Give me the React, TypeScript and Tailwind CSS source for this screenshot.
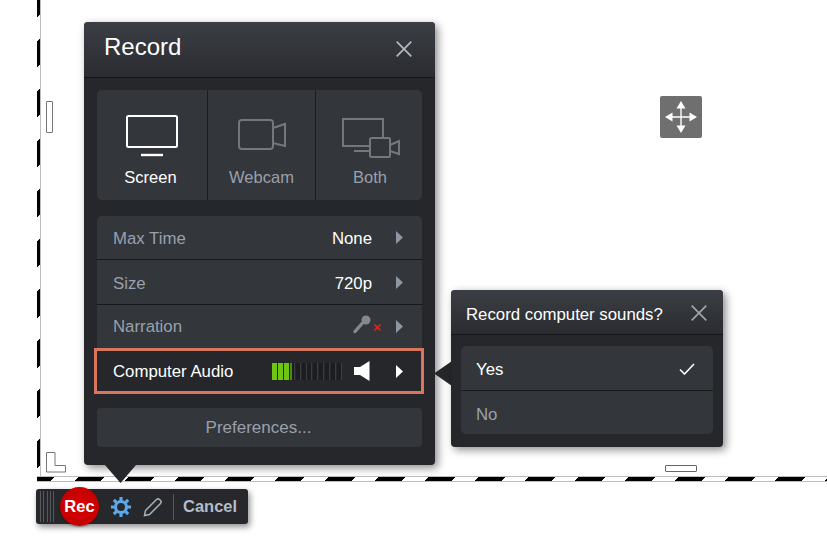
const font = { fontFamily: '"Liberation Sans", Arial, sans-serif' };

function CloseX({ size, className }: { size: number; className: string }) {
  return (
    <svg width={size} height={size} viewBox="0 0 16 16" className={className} fill="none" stroke="currentColor" strokeWidth="1.7">
      <path d="M0.7 0.7 L15.3 15.3 M15.3 0.7 L0.7 15.3" />
    </svg>
  );
}

function Tri({ className }: { className: string }) {
  return (
    <svg width="7" height="13" viewBox="0 0 7 13" className={className}>
      <path d="M0 0 L7 6.5 L0 13 Z" fill="currentColor" />
    </svg>
  );
}

function ListRow({ label, className, children }: { label: string; className: string; children: React.ReactNode }) {
  return (
    <div className={"flex items-center justify-between pl-4 pr-[19px] text-[16.8px] text-[#9aa0ad] " + className}>
      <span>{label}</span>
      {children}
    </div>
  );
}

function Meter() {
  const bars = Array.from({ length: 12 }, (_, i) => i);
  return (
    <div className="flex h-[17px] w-[70px] justify-between">
      {bars.map((i) => (
        <div
          key={i}
          className={
            i < 3
              ? "w-[5px] bg-[#6fc414]"
              : i === 3
                ? "w-[5px] border-l-2 border-r border-l-[#4f8a12] border-r-[#3a3c40] bg-[#1b1d20]"
                : "w-[5px] border-r border-[#3a3c40] bg-[#1b1d20]"
          }
        />
      ))}
    </div>
  );
}

export default function App() {
  return (
    <div style={font} className="relative h-[546px] w-[827px] overflow-hidden bg-white">
      {/* capture frame */}
      <div className="absolute left-[37px] top-0 h-[482px] w-[4px] border-r border-r-[#bdbdbd] bg-[repeating-linear-gradient(135deg,#000_0,#000_12.7px,#fff_12.7px,#fff_29px,#000_29px,#000_35.36px)]" />
      <div className="absolute left-[37px] top-[476px] h-[6px] w-[790px] border-y border-y-[#bdbdbd] bg-[repeating-linear-gradient(135deg,#000_0,#000_12.7px,#fff_12.7px,#fff_29px,#000_29px,#000_35.36px)]" />
      <div className="absolute left-[46px] top-[101px] h-[32px] w-[7px] rounded-[1px] border border-[#777]" />
      <div className="absolute left-[665px] top-[465px] h-[7px] w-[32px] rounded-[1px] border border-[#666]" />
      <svg className="absolute left-[46px] top-[452px]" width="21" height="21" viewBox="0 0 21 21" fill="none">
        <path d="M0.5 0.5 H9 V13.5 H19.5 V20 H0.5 Z" stroke="#777" />
      </svg>

      {/* move handle */}
      <div className="absolute left-[660px] top-[96px] flex h-[42px] w-[42px] items-center justify-center rounded-[2px] bg-[#6f6f6f]">
        <svg width="32" height="32" viewBox="0 0 32 32" fill="#fff">
          <path d="M16 0 L20.5 7.5 H11.5 Z M16 32 L11.5 24.5 H20.5 Z M0 16 L7.5 11.5 V20.5 Z M32 16 L24.5 20.5 V11.5 Z" />
          <path d="M15.3 6 H16.7 V26 H15.3 Z M6 15.3 H26 V16.7 H6 Z" />
        </svg>
      </div>

      {/* Record panel */}
      <div className="absolute left-[84px] top-[22px] flex h-[443px] w-[351px] flex-col rounded-[4px] bg-[#25272b] shadow-[3px_3px_8px_rgba(0,0,0,0.45)]">
        <div className="flex h-[56px] shrink-0 items-center justify-between rounded-t-[4px] border-b border-[#141517] bg-gradient-to-b from-[#3b3e44] to-[#2a2c31] pb-[5px] pl-5 pr-[23px]">
          <span className="text-[24px] leading-none text-white">Record</span>
          <CloseX size={16} className="mt-[3px] text-[#b4b8bf]" />
        </div>
        <div className="flex flex-1 flex-col px-[13px] pt-[12px]">
          <div className="flex h-[110px] rounded-[5px] bg-[#33363a] text-[16.5px]">
            <div className="flex w-[111px] flex-col items-center border-r border-[#1b1c1f] pt-[25px] text-white">
              <svg width="52" height="42" viewBox="0 0 52 42" fill="none" stroke="#fff">
                <rect x="1" y="1" width="50" height="31" rx="1.5" strokeWidth="2" />
                <path d="M15 40 H37" strokeWidth="2.4" />
              </svg>
              <span className="mr-[3px] mt-[8px]">Screen</span>
            </div>
            <div className="flex w-[108px] flex-col items-center border-r border-[#1b1c1f] pt-[29px] text-[#9aa0ad]">
              <svg width="48" height="32" viewBox="0 0 48 32" fill="none" stroke="#74777d" strokeWidth="2">
                <rect x="1" y="1" width="34" height="29" rx="3" />
                <path d="M35 9 L47 5 V27 L35 24" />
              </svg>
              <span className="mt-[14px]">Webcam</span>
            </div>
            <div className="flex flex-1 flex-col items-center pt-[28px] text-[#9aa0ad]">
              <svg width="58" height="40" viewBox="0 0 58 40" fill="none" stroke="#74777d" strokeWidth="2" className="ml-[4px]">
                <path d="M27 28 H1 V1 H41 V19" />
                <path d="M12 33 H28" />
                <rect x="28" y="20" width="20" height="19" rx="1.5" />
                <path d="M48 27 L57 23 V36 L48 33" />
              </svg>
              <span className="ml-[2px] mt-[7px]">Both</span>
            </div>
          </div>

          <div className="mt-[16px] flex flex-col">
            <div className="flex flex-col rounded-t-[5px] bg-[#33363a]">
              <ListRow label="Max Time" className="h-[44px] border-b border-[#17181a] pt-[3px]">
                <div className="flex items-center gap-[24px]">
                  <span className="text-white">None</span>
                  <Tri className="mb-[3px] text-[#8f96a3]" />
                </div>
              </ListRow>
              <ListRow label="Size" className="h-[45px] border-b border-[#17181a] pt-[4px]">
                <div className="flex items-center gap-[24px]">
                  <span className="text-white">720p</span>
                  <Tri className="mb-[3px] text-[#8f96a3]" />
                </div>
              </ListRow>
              <ListRow label="Narration" className="h-[43px]">
                <div className="flex items-center">
                  <svg width="18" height="20" viewBox="0 0 18 20" className="mb-[3px]">
                    <circle cx="13" cy="5" r="4.5" fill="#85888e" />
                    <path d="M9.5 8 L2 16.5" stroke="#85888e" strokeWidth="3.4" strokeLinecap="round" />
                  </svg>
                  <svg width="7" height="7" viewBox="0 0 7 7" className="ml-[3px] mr-[15px] mt-[2px]">
                    <path d="M0.5 0.5 L6.5 6.5 M6.5 0.5 L0.5 6.5" stroke="#e02020" strokeWidth="1.8" />
                  </svg>
                  <Tri className="text-[#8f96a3]" />
                </div>
              </ListRow>
            </div>
            <div className="-ml-[3px] -mr-[2px] flex h-[46px] items-center justify-between border-[3px] border-[#d8775d] bg-[#25272b] pl-[16px] pr-[18px] text-[16.8px] text-white">
              <span className="pt-[2px]">Computer Audio</span>
              <div className="flex items-center">
                <Meter />
                <svg width="16" height="20" viewBox="0 0 16 20" className="ml-[12px] mr-[26px]">
                  <path d="M0 6 H6 L15.5 0 V20 L6 14 H0 Z" fill="#fff" />
                </svg>
                <Tri className="text-white" />
              </div>
            </div>
          </div>

          <div className="mt-[14px] flex h-[39px] items-center justify-center rounded-[4px] bg-[#33363a] pr-[2px] text-[17px] text-[#9aa0ad]">
            Preferences...
          </div>
        </div>
      </div>
      {/* panel pointer */}
      <svg className="absolute left-[105px] top-[465px]" width="31" height="18" viewBox="0 0 31 18">
        <path d="M0 0 H31 L15.5 18 Z" fill="#25272b" />
      </svg>

      {/* Sounds panel */}
      <svg className="absolute left-[434px] top-[361px]" width="18" height="25" viewBox="0 0 18 25">
        <path d="M18 0 V25 L0 12.5 Z" fill="#25272b" />
      </svg>
      <div className="absolute left-[451px] top-[290px] flex h-[157px] w-[272px] flex-col rounded-[4px] bg-[#25272b] shadow-[3px_3px_8px_rgba(0,0,0,0.45)]">
        <div className="flex h-[45px] shrink-0 items-center justify-between rounded-t-[4px] border-b border-[#141517] bg-gradient-to-b from-[#3b3e44] to-[#2a2c31] pl-[15px] pr-[16px]">
          <span className="pt-[6px] text-[16.8px] text-white">Record computer sounds?</span>
          <CloseX size={16} className="mb-[2px] mt-[4px] text-[#a0a4ab]" />
        </div>
        <div className="mx-[10px] mt-[11px] flex flex-col rounded-[5px] bg-[#33363a] text-[16.8px]">
          <div className="flex h-[45px] items-center justify-between border-b border-[#17181a] pl-[15px] pr-[18px] text-white">
            <span className="pt-[4px]">Yes</span>
            <svg width="16" height="12" viewBox="0 0 16 12" fill="none" stroke="#fff" strokeWidth="1.6" className="mt-[1px]">
              <path d="M1 6.5 L5.5 11 L15 1" />
            </svg>
          </div>
          <div className="flex h-[43px] items-center pl-[15px] pt-[5px] text-[#9aa0ad]">No</div>
        </div>
      </div>

      {/* Recording toolbar */}
      <div className="absolute left-[36px] top-[489px] flex h-[35px] w-[212px] items-center rounded-[3px] bg-[#26282c] shadow-[2px_3px_6px_rgba(0,0,0,0.45)]">
        <div className="ml-[4px] flex h-[31px] w-[14px] justify-between">
          {[0, 1, 2, 3, 4].map((i) => (
            <div key={i} className="h-full w-[1px] bg-[#55585c]" />
          ))}
        </div>
        <div className="relative ml-[6px] flex h-[39px] w-[39px] shrink-0 items-center justify-center rounded-full bg-[radial-gradient(circle,#dd0000,#b80000)] text-[16.5px] font-bold text-white shadow-[0_1px_2px_rgba(0,0,0,0.4)]">
          Rec
        </div>
        <svg width="22" height="22" viewBox="0 0 24 24" className="ml-[11px] shrink-0" fill="none" stroke="#5ba8ea" strokeWidth="3.4">
          <circle cx="12" cy="12" r="6" />
          <path d="M12 1 V5.5 M12 18.5 V23 M1 12 H5.5 M18.5 12 H23 M4.2 4.2 L7.4 7.4 M16.6 16.6 L19.8 19.8 M19.8 4.2 L16.6 7.4 M7.4 16.6 L4.2 19.8" />
        </svg>
        <svg width="20" height="20" viewBox="0 0 20 20" className="ml-[11px] shrink-0" fill="none" stroke="#a9afba" strokeWidth="1.5">
          <path d="M1.5 18.5 L2.5 13.5 L13.5 2.5 Q15 1.2 16.5 2.5 L17.5 3.5 Q18.8 5 17.5 6.5 L6.5 17.5 Z" />
        </svg>
        <div className="ml-[10px] h-[26px] w-[1px] bg-[#55585d]" />
        <span className="ml-[9px] text-[16.5px] font-bold text-[#b3bccc]">Cancel</span>
      </div>
    </div>
  );
}
